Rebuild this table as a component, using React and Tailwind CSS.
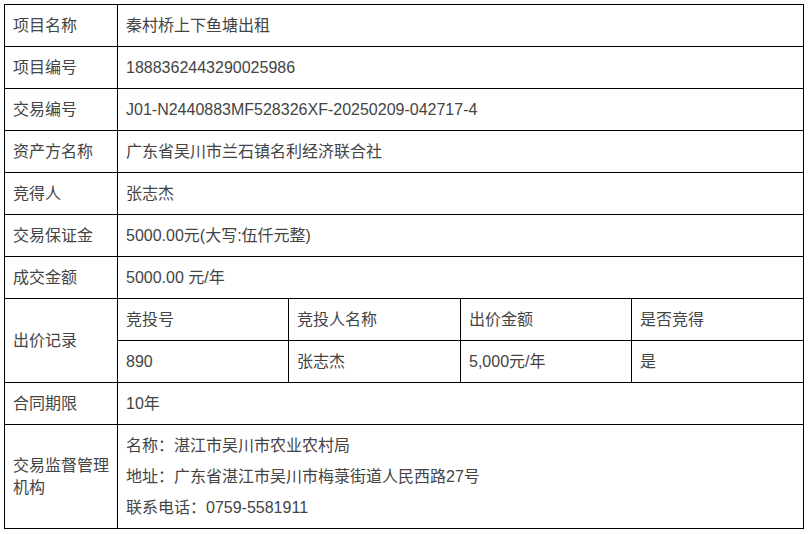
import React from "react";

const rows = [
	["项目名称", "秦村桥上下鱼塘出租"],
	["项目编号", "1888362443290025986"],
	["交易编号", "J01-N2440883MF528326XF-20250209-042717-4"],
	["资产方名称", "广东省吴川市兰石镇名利经济联合社"],
	["竞得人", "张志杰"],
	["交易保证金", "5000.00元(大写:伍仟元整)"],
	["成交金额", "5000.00 元/年"],
];

const td = "border border-black px-2 align-middle";

export default function App() {
	return (
		<div
			className="pl-[4px] pt-[4px] text-[16px] text-[#444]"
			style={{ fontFamily: '"Liberation Sans", "Noto Sans CJK SC", sans-serif' }}
		>
			<table className="w-[800px] table-fixed border-collapse">
				<colgroup>
					<col className="w-[113px]" />
					<col className="w-[171px]" />
					<col className="w-[172px]" />
					<col className="w-[171px]" />
					<col className="w-[172px]" />
				</colgroup>
				<tbody>
					{rows.map(([label, value]) => (
						<tr key={label} className="h-[42px]">
							<td className={td}>{label}</td>
							<td className={td} colSpan={4}>
								{value}
							</td>
						</tr>
					))}
					<tr className="h-[42px]">
						<td className={td} rowSpan={2}>
							出价记录
						</td>
						<td className={td}>竞投号</td>
						<td className={td}>竞投人名称</td>
						<td className={td}>出价金额</td>
						<td className={td}>是否竞得</td>
					</tr>
					<tr className="h-[42px]">
						<td className={td}>890</td>
						<td className={td}>张志杰</td>
						<td className={td}>5,000元/年</td>
						<td className={td}>是</td>
					</tr>
					<tr className="h-[42px]">
						<td className={td}>合同期限</td>
						<td className={td} colSpan={4}>
							10年
						</td>
					</tr>
					<tr>
						<td className={`${td} leading-[22px]`}>交易监督管理机构</td>
						<td className={`${td} py-[5px] leading-[31px]`} colSpan={4}>
							<div>名称：湛江市吴川市农业农村局</div>
							<div>地址：广东省湛江市吴川市梅菉街道人民西路27号</div>
							<div>联系电话：0759-5581911</div>
						</td>
					</tr>
				</tbody>
			</table>
		</div>
	);
}
